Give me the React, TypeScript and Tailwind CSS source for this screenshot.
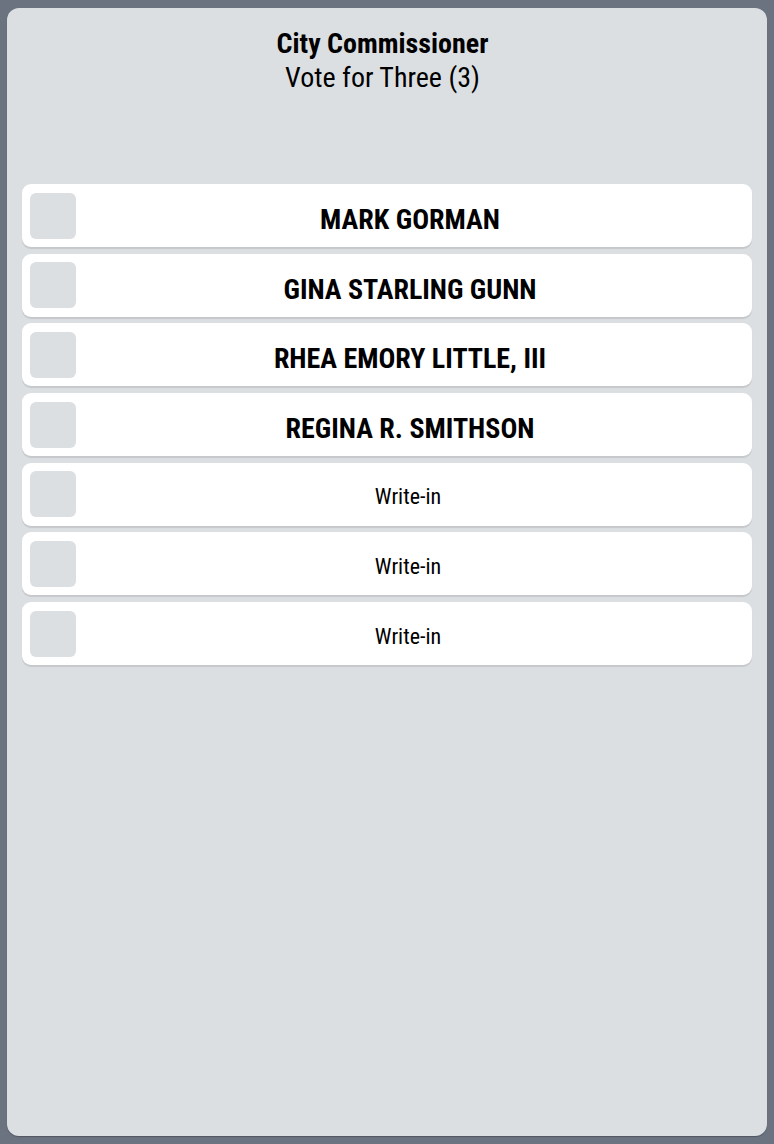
import React from "react";

const candidates = [
  { name: "MARK GORMAN", writeIn: false },
  { name: "GINA STARLING GUNN", writeIn: false },
  { name: "RHEA EMORY LITTLE, III", writeIn: false },
  { name: "REGINA R. SMITHSON", writeIn: false },
  { name: "Write-in", writeIn: true },
  { name: "Write-in", writeIn: true },
  { name: "Write-in", writeIn: true },
];

export default function App() {
  return (
    <div
      className="w-[774px] h-[1144px] bg-[#6b7280] px-[7px] py-[8px]"
      style={{ fontFamily: '"Roboto Condensed", Roboto, "Liberation Sans", sans-serif' }}
    >
      <div className="h-full rounded-[12px] bg-[#dcdfe2] shadow-[0_1px_1px_rgba(0,0,0,0.25)] px-[15px] pt-[20px] flex flex-col">
        <div className="flex flex-col items-center text-black [font-stretch:75%] pr-[9px]">
          <div className="text-[28px] leading-[32px] font-bold">City Commissioner</div>
          <div className="text-[28px] leading-[32px] mt-[2px]">Vote for Three (3)</div>
        </div>
        <div className="mt-[90px] flex flex-col gap-[6.7px]">
          {candidates.map((c, i) => (
            <div
              key={i}
              className="h-[63px] rounded-[9px] bg-white shadow-[0_2px_1px_rgba(0,0,0,0.1)] flex items-center pl-[8px] pr-[8px] relative"
            >
              <div className="w-[46px] h-[46px] rounded-[6px] bg-[#dcdfe2] shrink-0" />
              <div
                className={
                  "flex-1 text-center text-black [font-stretch:75%] " +
                  (c.writeIn
                    ? "text-[22px] pt-[5px] pr-[4px]"
                    : "text-[28px] pt-[9px] font-bold")
                }
              >
                {c.name}
              </div>
            </div>
          ))}
        </div>
      </div>
    </div>
  );
}
